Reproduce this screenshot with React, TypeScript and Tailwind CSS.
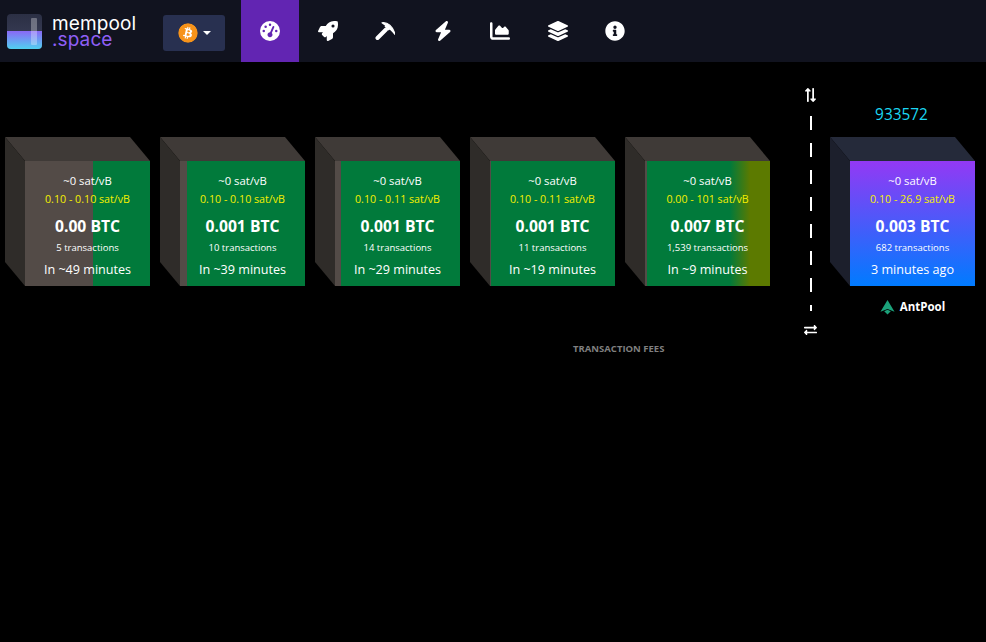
import React from "react";
import { FaRocket, FaInfoCircle, FaExchangeAlt, FaBitcoin, FaLayerGroup } from "react-icons/fa";
import { FaGaugeHigh, FaBolt, FaChartArea } from "react-icons/fa6";

const font = "font-['Open_Sans','Noto_Sans',sans-serif]";

function Logo() {
  return (
    <div className="flex items-center">
      <div className="relative ml-[7px] h-[35px] w-[35px] overflow-hidden rounded-[4px] bg-[linear-gradient(180deg,#2b2f44,#3d415c)]">
        <div className="absolute inset-x-0 bottom-0 h-[18px] bg-[linear-gradient(180deg,#8a68f6,#50d0f0)]" />
        <div className="absolute right-[5px] top-[4px] h-[27px] w-[6px] rounded-[1px] bg-white/30" />
      </div>
      <div className="ml-[10px] mt-[1px] flex w-[83px] flex-col font-['Inter',sans-serif] text-[19px] font-normal leading-[16px] tracking-[0.1px]">
        <span className="text-white">mempool</span>
        <span className="text-[#8f5ff6]">.space</span>
      </div>
    </div>
  );
}

function Pick({ className }: { className?: string }) {
  return (
    <svg viewBox="0 0 20 20" className={className} fill="white">
      <path d="M2.500 17 11 8.500" stroke="white" strokeWidth="4" strokeLinecap="round" />
      <path d="M7 1.800C12.500 1 18 5 20 13.500 17 9.500 12.500 5.500 7 1.800Z" stroke="white" strokeWidth="1.200" strokeLinejoin="round" />
      <path d="M9.500 5.500 11 3.500 15.500 8 13.500 9.500Z" />
    </svg>
  );
}

function Cube({ tone, children }: { tone: "mem" | "mined"; children: React.ReactNode }) {
  const top = tone === "mem" ? "bg-[#3f3a37]" : "bg-[#252a3a]";
  const left = tone === "mem" ? "bg-[#2f2c29]" : "bg-[#1c1f2c]";
  return (
    <div className="relative h-[125px] w-[125px]">
      <div className={`absolute left-[-20px] top-[-24px] h-[24px] w-[145px] ${top} [clip-path:polygon(0_0,125px_0,100%_100%,20px_100%)]`} />
      <div className={`absolute left-[-20px] top-[-24px] h-[149px] w-[20px] ${left} [clip-path:polygon(0_0,100%_24px,100%_100%,0_125px)]`} />
      {children}
    </div>
  );
}

function Stats({ fee, range, btc, tx, time }: { fee: string; range: string; btc: string; tx: string; time: string }) {
  return (
    <div className="relative flex h-full flex-col items-center whitespace-nowrap text-white">
      <div className="mt-[12px] text-[11.300px] leading-[16px]">{fee}</div>
      <div className="mt-[2px] text-[10.700px] leading-[16px] text-[#f5f000]">{range}</div>
      <div className="mt-[8px] text-[15.700px] font-bold leading-[22px]">{btc}</div>
      <div className="mt-[4px] text-[9.500px] leading-[14px]">{tx}</div>
      <div className="mt-[6px] text-[12.600px] leading-[18px]">{time}</div>
    </div>
  );
}

const blocks = [
  { cls: "bg-[linear-gradient(90deg,#534b47_0,#534b47_68px,#017a3b_68px)]", range: "0.10 - 0.10 sat/vB", btc: "0.00 BTC", tx: "5 transactions", time: "In ~49 minutes" },
  { cls: "bg-[linear-gradient(90deg,#534b47_0,#534b47_7px,#017a3b_7px)]", range: "0.10 - 0.10 sat/vB", btc: "0.001 BTC", tx: "10 transactions", time: "In ~39 minutes" },
  { cls: "bg-[linear-gradient(90deg,#534b47_0,#534b47_6px,#017a3b_6px)]", range: "0.10 - 0.11 sat/vB", btc: "0.001 BTC", tx: "14 transactions", time: "In ~29 minutes" },
  { cls: "bg-[linear-gradient(90deg,#534b47_0,#534b47_1px,#017a3b_1px)]", range: "0.10 - 0.11 sat/vB", btc: "0.001 BTC", tx: "11 transactions", time: "In ~19 minutes" },
  { cls: "bg-[linear-gradient(90deg,#534b47_0,#534b47_2px,#017a3b_2px,#017a3b_85px,#5c7a00_105px)]", range: "0.00 - 101 sat/vB", btc: "0.007 BTC", tx: "1,539 transactions", time: "In ~9 minutes" },
];

export default function App() {
  const nav = [FaRocket, Pick, FaBolt, FaChartArea, FaLayerGroup, FaInfoCircle];
  return (
    <div className={`h-[642px] w-[986px] overflow-hidden bg-black ${font}`}>
      <nav className="flex h-[62px] items-center bg-[#11131f]">
        <Logo />
        <div className="ml-[28px] mt-[4px] flex h-[36px] w-[62px] items-center justify-center gap-[5px] rounded-[3px] bg-[#283050]">
          <FaBitcoin className="h-[20px] w-[20px] rounded-full bg-[radial-gradient(white_60%,transparent_62%)] text-[#f7931a]" />
          <span className="h-0 w-0 border-x-[4px] border-t-[4px] border-x-transparent border-t-white" />
        </div>
        <div className="ml-[16px] flex h-[62px] w-[58px] items-center justify-center bg-[#6225b2]">
          <FaGaugeHigh className="h-[20px] w-[20px] text-white" />
        </div>
        {nav.map((I, i) => (
          <div key={i} className="flex h-[62px] w-[57.500px] items-center justify-center text-white">
            <I className="h-[20px] w-[20px]" />
          </div>
        ))}
      </nav>
      <main className="relative">
        <div className="flex pl-[25px] pt-[99px]">
          <div className="flex gap-[30px]">
            {blocks.map((b) => (
              <Cube key={b.time} tone="mem">
                <div className={`h-full ${b.cls}`}>
                  <Stats fee="~0 sat/vB" range={b.range} btc={b.btc} tx={b.tx} time={b.time} />
                </div>
              </Cube>
            ))}
          </div>
          <div className="ml-[80px]">
            <Cube tone="mined">
              <div className="absolute left-[-11px] right-[11px] top-[-56px] text-center text-[15.400px] leading-[20px] text-[#1bd8f4]">933572</div>
              <div className="h-full bg-[linear-gradient(180deg,#9339f4,#007bff)]">
                <Stats fee="~0 sat/vB" range="0.10 - 26.9 sat/vB" btc="0.003 BTC" tx="682 transactions" time="3 minutes ago" />
              </div>
              <div className="mt-[13px] flex items-center justify-center gap-[5px] text-[11.500px] font-bold leading-[16px] text-white">
                <svg viewBox="0 0 16 16" className="h-[15px] w-[15px]" fill="#1ba27a">
                  <path d="M8 0 15.500 12.500 8 9.500 0.500 12.500Z" />
                  <path d="M4.500 12 8 10.500l3.500 1.500L8 15.500Z" />
                </svg>
                AntPool
              </div>
            </Cube>
          </div>
        </div>
        <div className="absolute left-[802px] top-[26px] flex w-[16px] flex-col items-center text-white">
          <FaExchangeAlt className="h-[14px] w-[15px] rotate-90" />
          <div className="ml-[2px] mt-[14px] h-[195px] w-[2px] bg-[repeating-linear-gradient(180deg,white_0,white_14px,transparent_14px,transparent_27px)]" />
          <FaExchangeAlt className="mt-[12px] h-[14px] w-[13px]" />
        </div>
        <div className="absolute left-[573px] top-[280px] text-[9.500px] font-bold uppercase leading-[14px] text-[#7f7f7f]">Transaction fees</div>
      </main>
    </div>
  );
}
